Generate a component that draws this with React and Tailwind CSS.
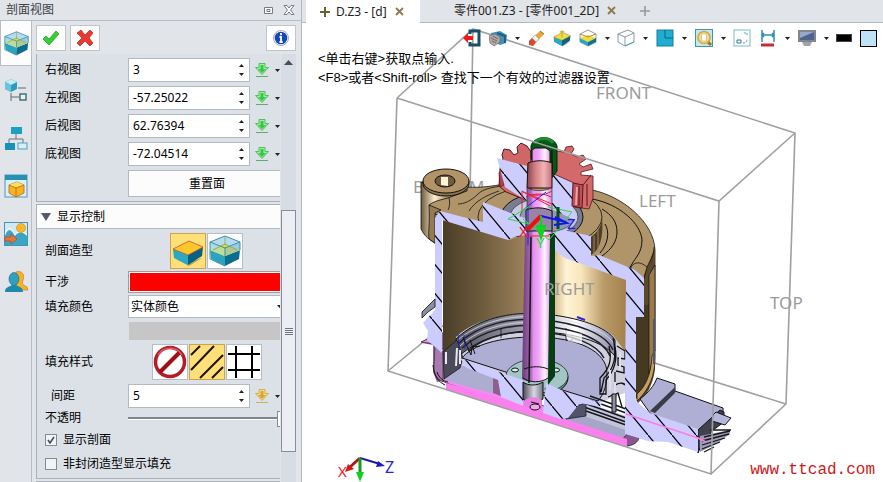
import React, { useState } from "react";

const views = [
  { id: "right", label: "右视图" },
  { id: "left", label: "左视图" },
  { id: "back", label: "后视图" },
  { id: "bottom", label: "底视图" },
];

function Caret({ className = "" }) {
  return (
    <svg className={className} width="5" height="3" viewBox="0 0 5 3">
      <path d="M0 0h5L2.5 3z" fill="#222" />
    </svg>
  );
}

function SectionBox({ size }) {
  return (
    <svg width={size} height={size} viewBox="0 0 32 32">
      <path d="M3 22l14 8 13-8-13 4z" fill="#556" opacity=".5" />
      <path d="M1 15l15 6v10L2 24z" fill="#2aa3bd" />
      <path d="M16 21l15-6-1 9-14 7z" fill="#0c6e8f" />
      <path d="M1 7l15-6 15 6v8l-15 6-15-6z" fill="#b4dcec" />
      <path d="M1 15l14-6 16 6-15 6z" fill="#d9de45" />
      <path d="M1 7l15 6v8L1 15z" fill="#a6d8ea" opacity=".5" />
      <path d="M16 13l15-6v8l-15 6z" fill="#7fbcd6" opacity=".5" />
      <path d="M1 7l15-6 15 6-15 6zM1 7v17l15 7M16 13v8M31 7v8" fill="none" stroke="#3d8fac" />
      <path d="M16 1v9M16 9l12 6M16 9L4 15" fill="none" stroke="#8a9a4a" strokeWidth=".7" />
    </svg>
  );
}

function SolidBox({ size, pin }) {
  return (
    <svg width={size} height={size} viewBox="0 0 32 32">
      <path d="M4 24l13 7 13-8-13 4z" fill="#665" opacity=".5" />
      <path d="M1 14l15 6v10L2 23z" fill="#29a9c3" />
      <path d="M16 20l15-8-1 9-14 9z" fill="#0a6283" />
      <path d="M1 14L17 6l14 6-15 8z" fill={pin ? "#e8e03c" : "#fdc72c"} stroke="#b5482a" strokeWidth=".7" />
      {pin && <path d="M16 2v13M12 5h8" stroke="#c8b020" strokeWidth="2" />}
    </svg>
  );
}

function CutBox() {
  return (
    <svg width="18" height="18" viewBox="0 0 18 18">
      <path d="M1 5l8-4 8 4v8l-8 4-8-4z" fill="#fff" stroke="#999" />
      <path d="M1 9l8-3 8 3-8 4z" fill="#f7dc2e" />
      <path d="M1 9l8 4v4l-8-4z" fill="#2aa6c2" />
      <path d="M17 9l-8 4v4l8-4z" fill="#0b7395" />
      <path d="M1 5l8 3 8-3" fill="none" stroke="#b8864a" />
    </svg>
  );
}

function DownloadIcon({ gold }) {
  return (
    <svg width="14" height="14" viewBox="0 0 14 14">
      <path
        d="M4 .5h6v4h3.500L7 11.500.5 4.500H4z"
        fill={gold ? "#f8dc84" : "#9df09c"}
        stroke={gold ? "#d4ae4c" : "#52c05c"}
      />
      <path d="M5.500 2h3v4H11L7 10 3 6h2.500z" fill={gold ? "#d9a436" : "#3cc44a"} />
      <path d="M1 13.500h12" stroke={gold ? "#c9b060" : "#56b166"} />
    </svg>
  );
}

function TreeIcon() {
  return (
    <svg width="24" height="24" viewBox="0 0 24 24">
      <path d="M1 4l6-3 6 3v7l-6 3-6-3z" fill="#2b9bc0" />
      <path d="M1 4l6-3 6 3-6 3z" fill="#c5ebf7" />
      <path d="M1 4l6 3v7l-6-3z" fill="#6cc3de" />
      <path d="M14 10h8M7 15v8M7 19h8" stroke="#5b6d74" fill="none" />
      <path d="M16 16h6v6h-6z" fill="#e8f2f4" stroke="#47707a" strokeWidth="1.5" />
    </svg>
  );
}

function AssemblyIcon() {
  return (
    <svg width="24" height="24" viewBox="0 0 24 24">
      <path d="M12 8v5M5 17v-4h14v4" fill="none" stroke="#6a7478" />
      <rect x="7" y="1" width="11" height="7" fill="#1ba0c0" />
      <rect x="1" y="17" width="10" height="7" fill="#1692b8" />
      <rect x="14" y="17" width="9" height="6" fill="#d4f0fa" stroke="#55a0b8" />
    </svg>
  );
}

function WindowIcon() {
  return (
    <svg width="24" height="24" viewBox="0 0 24 24">
      <rect x="1" y="1" width="22" height="22" fill="#d9effa" stroke="#5596b6" />
      <path d="M1 1h22v5H1z" fill="#2492b3" />
      <path d="M5 11l8-3 7 3v8l-8 4-7-4z" fill="#f6b51e" stroke="#b8641c" strokeWidth=".8" />
      <path d="M5 11l8-3 7 3-8 3z" fill="#ffe35c" />
      <path d="M5 11l7 3v9M12 14l8-3" fill="none" stroke="#b8641c" strokeWidth=".8" />
    </svg>
  );
}

function SceneIcon() {
  return (
    <svg width="24" height="24" viewBox="0 0 24 24">
      <rect x=".5" y=".5" width="23" height="23" fill="#cfe9f5" stroke="#4b93b3" />
      <path d="M1 14C4 6 7 7 11 14c4-5 8-4 12 0v9H1z" fill="#3aa5c4" />
      <path d="M1 12C4 4 7 5 11 13c4-5 8-4 12 0" fill="none" stroke="#fff" />
      <circle cx="17" cy="6" r="4.500" fill="#fbb829" stroke="#d98418" strokeWidth=".6" />
      <path d="M1 15h6v-3l6 5-6 5v-3H1z" fill="#f0703c" stroke="#b04418" strokeWidth=".6" />
    </svg>
  );
}

function PeopleIcon() {
  return (
    <svg width="24" height="22" viewBox="0 0 24 22">
      <path d="M12 1c6-2 9 3 7 8-1 3-2 4 4 7l1 3H12z" fill="#fbb21e" stroke="#c9801a" strokeWidth=".7" />
      <ellipse cx="10" cy="8" rx="5" ry="6.5" fill="#31a0bd" stroke="#176a86" strokeWidth=".6" />
      <path d="M1 21c0-5 4-5 7-7h4c3 2 7 2 7 7z" fill="#1b8aad" />
    </svg>
  );
}

function SpinField({ id, value, onChange }) {
  function step(amount) {
    onChange(String(Number(value) + amount));
  }

  return (
    <div className="flex h-6 w-[122px] shrink-0 border border-[#b4bac4] bg-white">
      <input
        id={id}
        className="w-0 flex-1 pl-1 text-xs text-black outline-none"
        value={value}
        onChange={(e) => onChange(e.target.value)}
      />
      <div className="flex w-4 flex-col items-center justify-center gap-1.5">
        <button type="button" aria-label="+" onClick={() => step(1)}>
          <Caret className="rotate-180" />
        </button>
        <button type="button" aria-label="-" onClick={() => step(-1)}>
          <Caret />
        </button>
      </div>
    </div>
  );
}

function NumberRow({ id, label, value, onChange, gold, indent }) {
  return (
    <div className="flex h-6 items-center">
      <label
        htmlFor={id}
        className={indent ? "w-[83px] shrink-0 pl-1.5" : "w-[83px] shrink-0"}
      >
        {label}
      </label>
      <SpinField id={id} value={value} onChange={onChange} />
      <button type="button" className="ml-[5px] flex shrink-0 items-center gap-1.5" aria-label={label}>
        <DownloadIcon gold={gold} />
        <Caret />
      </button>
    </div>
  );
}

function CheckRow({ id, label, checked, onChange }) {
  return (
    <div className="flex h-6 items-center gap-1.5">
      <span className="grid place-items-center">
        <input
          id={id}
          type="checkbox"
          checked={checked}
          onChange={(e) => onChange(e.target.checked)}
          className="col-start-1 row-start-1 size-3 appearance-none border border-[#858b92] bg-[#f2f3f4]"
        />
        {checked && (
          <svg className="pointer-events-none col-start-1 row-start-1" width="8" height="8" viewBox="0 0 8 8">
            <path d="M1 4l2 3 4-6" fill="none" stroke="#4a4f55" strokeWidth="1.6" />
          </svg>
        )}
      </span>
      <label htmlFor={id}>{label}</label>
    </div>
  );
}

function IconChoice({ active, onClick, label, children }) {
  return (
    <button
      type="button"
      aria-label={label}
      onClick={onClick}
      className={
        active
          ? "grid size-9 shrink-0 place-items-center border border-[#c9a552] bg-[#ffdf78]"
          : "grid size-9 shrink-0 place-items-center border border-[#b8bec8] bg-white"
      }
    >
      {children}
    </button>
  );
}

function SectionPanel() {
  const [values, setValues] = useState({
    right: "3",
    left: "-57.25022",
    back: "62.76394",
    bottom: "-72.04514",
  });
  const [spacing, setSpacing] = useState("5");
  const [shape, setShape] = useState("solid");
  const [fill, setFill] = useState("hatch");
  const [opacity, setOpacity] = useState(100);
  const [showSection, setShowSection] = useState(true);
  const [showOpen, setShowOpen] = useState(false);

  return (
    <div className="flex min-h-0 flex-1">
      <div className="flex w-[244px] flex-col gap-0.5 overflow-hidden">
        <section className="flex shrink-0 flex-col gap-1 border-b border-l border-[#a9b0b9] bg-[#dce0e7] pt-1 pb-1 pl-2">
          {views.map((view) => (
            <NumberRow
              key={view.id}
              id={view.id}
              label={view.label}
              value={values[view.id]}
              onChange={(v) => setValues({ ...values, [view.id]: v })}
            />
          ))}
          <button
            type="button"
            className="ml-[83px] h-[27px] w-[158px] border border-[#b4bac4] bg-[#fcfcfd]"
          >
            重置面
          </button>
        </section>

        <section className="shrink-0 border-y border-l border-[#a9b0b9] bg-[#dce0e7]">
          <h2 className="flex h-6 items-center gap-1.5 border-b border-[#b4bac4] bg-[#fcfcfd] pl-1">
            <svg width="10" height="8" viewBox="0 0 10 8">
              <path d="M0 0h10L5 8z" fill="#555b66" />
            </svg>
            显示控制
          </h2>
          <div className="pt-1 pb-0.5 pl-2">
            <div className="flex items-center">
              <span className="w-[125px] shrink-0">剖面造型</span>
              <div className="flex gap-px">
                <IconChoice label="实体" active={shape === "solid"} onClick={() => setShape("solid")}>
                  <SolidBox size={32} />
                </IconChoice>
                <IconChoice label="剖切" active={shape === "cut"} onClick={() => setShape("cut")}>
                  <SectionBox size={32} />
                </IconChoice>
              </div>
            </div>
            <div className="mt-0.5 flex items-center">
              <label htmlFor="clash" className="w-[83px] shrink-0">
                干涉
              </label>
              <button
                id="clash"
                type="button"
                className="h-[22px] w-[158px] shrink-0 border border-[#a39a9a] bg-[#ff0000] outline-1 -outline-offset-2 outline-white"
              />
            </div>
            <div className="mt-0.5 flex items-center">
              <label htmlFor="color" className="w-[83px] shrink-0">
                填充颜色
              </label>
              <div className="grid w-[158px] shrink-0 items-center">
                <select
                  id="color"
                  className="col-start-1 row-start-1 h-[23px] appearance-none border border-[#b4bac4] bg-white pl-0.5 text-xs"
                >
                  <option>实体颜色</option>
                </select>
                <Caret className="pointer-events-none col-start-1 row-start-1 mr-1 justify-self-end" />
              </div>
            </div>
            <div className="mt-1 ml-[84px] h-[18px] bg-[#c6c6c6]" />
            <div className="mt-1 flex items-center">
              <span className="w-[107px] shrink-0">填充样式</span>
              <div className="flex gap-px">
                <IconChoice label="无" active={fill === "none"} onClick={() => setFill("none")}>
                  <svg width="34" height="34" viewBox="0 0 34 34">
                    <circle cx="17" cy="17" r="14.5" fill="#fff" stroke="#b51c26" strokeWidth="3.5" />
                    <path d="M7 27L27 7" stroke="#a30d14" strokeWidth="4" />
                    <path d="M5 10a14 14 0 0 1 24 0" fill="none" stroke="#dd6070" strokeWidth="1.2" />
                  </svg>
                </IconChoice>
                <IconChoice label="斜线" active={fill === "hatch"} onClick={() => setFill("hatch")}>
                  <svg width="34" height="34" viewBox="0 0 34 34">
                    <path
                      d="M1 10l9-9M1 25L24 1M10 33L33 10M22 33l11-11"
                      stroke="#1b1608"
                      strokeWidth="2"
                    />
                  </svg>
                </IconChoice>
                <IconChoice label="网格" active={fill === "grid"} onClick={() => setFill("grid")}>
                  <svg width="34" height="34" viewBox="0 0 34 34">
                    <path d="M9 1v32M25 1v32M1 9h32M1 25h32" stroke="#000" strokeWidth="2" />
                  </svg>
                </IconChoice>
              </div>
            </div>
            <div className="mt-1">
              <NumberRow id="spacing" label="间距" value={spacing} onChange={setSpacing} gold indent />
            </div>
            <div className="flex h-5 items-center">
              <label htmlFor="opacity" className="w-[83px] shrink-0">
                不透明
              </label>
              <input
                id="opacity"
                type="range"
                value={opacity}
                onChange={(e) => setOpacity(e.target.value)}
                className="h-4 w-[157px] shrink-0 appearance-none bg-transparent [&::-webkit-slider-runnable-track]:h-[3px] [&::-webkit-slider-runnable-track]:border-b [&::-webkit-slider-runnable-track]:border-white [&::-webkit-slider-runnable-track]:bg-[#80858c] [&::-webkit-slider-thumb]:-mt-1.5 [&::-webkit-slider-thumb]:h-4 [&::-webkit-slider-thumb]:w-2 [&::-webkit-slider-thumb]:appearance-none [&::-webkit-slider-thumb]:border [&::-webkit-slider-thumb]:border-[#858b92] [&::-webkit-slider-thumb]:bg-white"
              />
            </div>
            <CheckRow id="show-section" label="显示剖面" checked={showSection} onChange={setShowSection} />
            <CheckRow id="show-open" label="非封闭造型显示填充" checked={showOpen} onChange={setShowOpen} />
          </div>
        </section>
        <div className="flex-1 border-t border-[#a9b0b9] bg-[#c9ced6]" />
      </div>

      <div className="ml-px flex w-[15px] flex-col items-center bg-[#d8dce4]">
        <svg className="mt-1.5" width="9" height="5" viewBox="0 0 9 5">
          <path d="M0 5h9L4.5 0z" fill="#4a4e57" />
        </svg>
        <div className="mt-[145px] mb-[30px] flex w-full flex-1 flex-col items-center justify-center gap-px border border-[#868d9b] bg-[#eceef4]">
          <span className="h-px w-2 bg-[#70757f]" />
          <span className="h-px w-2 bg-[#70757f]" />
          <span className="h-px w-2 bg-[#70757f]" />
          <span className="h-px w-2 bg-[#70757f]" />
        </div>
      </div>
    </div>
  );
}

function Sidebar() {
  return (
    <aside className="flex w-[301px] shrink-0 flex-col bg-[#e1e4e8]">
      <header className="flex h-[21px] shrink-0 items-center border-b border-[#b9bec6] px-1.5 text-[#3c4048]">
        <h1 className="flex-1">剖面视图</h1>
        <button type="button" aria-label="还原" className="mr-2.5">
          <svg width="9" height="7" viewBox="0 0 9 7">
            <path d="M.5.5h8v6h-8zM3 2.5h3v2H3z" fill="#fff" stroke="#777d86" />
          </svg>
        </button>
        <button type="button" aria-label="关闭">
          <svg width="12" height="10" viewBox="0 0 12 10">
            <path d="M1 .5h3l2 2.500 2-2.500h3L7.500 5 11 9.500H8L6 7 4 9.500H1L4.500 5z" fill="#fff" stroke="#777d86" />
          </svg>
        </button>
      </header>
      <div className="flex min-h-0 flex-1">
        <nav className="flex w-8 shrink-0 flex-col items-center border-r border-[#b9bec6]">
          <button type="button" aria-label="剖面" className="grid h-[45px] w-full place-items-center border-b border-l border-[#b9bec6] bg-[#fcfcfd]">
            <SectionBox size={25} />
          </button>
          <button type="button" aria-label="历史" className="grid h-12 place-items-center">
            <TreeIcon />
          </button>
          <button type="button" aria-label="装配" className="grid h-12 place-items-center">
            <AssemblyIcon />
          </button>
          <button type="button" aria-label="视图" className="grid h-12 place-items-center">
            <WindowIcon />
          </button>
          <button type="button" aria-label="视觉" className="grid h-12 place-items-center">
            <SceneIcon />
          </button>
          <button type="button" aria-label="角色" className="grid h-12 place-items-center">
            <PeopleIcon />
          </button>
        </nav>
        <div className="flex min-w-0 flex-1 flex-col pr-1 pl-1">
          <div className="flex h-[33px] shrink-0 items-center gap-1 pr-px">
            <button type="button" aria-label="确定" className="grid h-[26px] w-[30px] place-items-center border border-[#c0c5cd] bg-white">
              <svg width="18" height="16" viewBox="0 0 18 16">
                <path d="M1 9l3-3 3 3 7-8 3 3L7 15z" fill="#35cf2e" stroke="#1f9c20" strokeWidth=".7" />
              </svg>
            </button>
            <button type="button" aria-label="取消" className="grid h-[26px] w-[30px] place-items-center border border-[#c0c5cd] bg-white">
              <svg width="18" height="18" viewBox="0 0 18 18">
                <path d="M1 4l4-3 4 5 5-5 3 3-4 5 4 5-3 3-5-5-5 5-3-3 5-5z" fill="#ea3a2e" stroke="#b52620" strokeWidth=".7" />
              </svg>
            </button>
            <button type="button" aria-label="信息" className="ml-auto grid h-[26px] w-[30px] place-items-center border border-[#c0c5cd] bg-white">
              <svg width="16" height="16" viewBox="0 0 16 16">
                <circle cx="8" cy="8" r="7.500" fill="#fff" stroke="#8a94b0" strokeWidth=".8" />
                <circle cx="8" cy="8" r="6.300" fill="#1447b8" />
                <path d="M8 3v2.200M6.500 7H8v5M6.500 12h3.200" fill="none" stroke="#fff" strokeWidth="1.800" />
              </svg>
            </button>
          </div>
          <SectionPanel />
        </div>
      </div>
    </aside>
  );
}

function Tabs() {
  return (
    <nav className="flex h-[23px] shrink-0 items-end border-b border-[#b3b8c0] bg-[#e1e4e8] pl-1 text-[#222]">
      <div className="-mb-px flex h-[23px] w-[114px] items-center bg-white pl-3.5">
        <svg width="10" height="10" viewBox="0 0 10 10">
          <path d="M5 0v10M0 5h10" stroke="#6d5f35" strokeWidth="2" />
        </svg>
        <button type="button" className="ml-1.5 whitespace-nowrap">
          D.Z3 - [d]
        </button>
        <button type="button" aria-label="关闭" className="ml-2">
          <svg width="9" height="9" viewBox="0 0 9 9">
            <path d="M1 1l7 7M8 1L1 8" stroke="#8a7b4b" strokeWidth="1.800" />
          </svg>
        </button>
      </div>
      <div className="flex h-[23px] items-center pl-[34px]">
        <button type="button" className="whitespace-nowrap">
          零件001.Z3 - [零件001_2D]
        </button>
        <button type="button" aria-label="关闭" className="ml-2">
          <svg width="9" height="9" viewBox="0 0 9 9">
            <path d="M1 1l7 7M8 1L1 8" stroke="#8a7b4b" strokeWidth="1.800" />
          </svg>
        </button>
        <button type="button" aria-label="新建" className="ml-6">
          <svg width="10" height="10" viewBox="0 0 10 10">
            <path d="M5 0v10M0 5h10" stroke="#999" strokeWidth="1.600" />
          </svg>
        </button>
      </div>
    </nav>
  );
}

function Tool({ label, menu, children }) {
  return (
    <button type="button" aria-label={label} className="flex h-[18px] items-center gap-2">
      {children}
      {menu && <Caret />}
    </button>
  );
}

function Toolbar() {
  return (
    <div className="mt-1.5 mr-1.5 ml-auto flex w-[414px] justify-between">
      <Tool label="退出">
        <svg width="18" height="18" viewBox="0 0 18 18">
          <path d="M7 5V2h9v14H7v-3" fill="none" stroke="#174f66" strokeWidth="3" />
          <path d="M0 9l5-5v3h5v4H5v3z" fill="#f01818" />
        </svg>
      </Tool>
      <Tool label="模型" menu>
        <svg width="18" height="18" viewBox="0 0 18 18">
          <path d="M2 4l9-2 7 4-1 8-6 2-8-4z" fill="#3c93b5" />
          <path d="M8 4l8 3v7" fill="none" stroke="#1f5f88" strokeWidth="2" />
          <path d="M0 7l6-2 5 3v5l-6 4-4-3z" fill="#b6a9a4" stroke="#6d6a70" strokeWidth=".7" />
          <path d="M2 9l6 3M4 7l5 3M3 12l4 2" stroke="#555" strokeWidth=".8" />
        </svg>
      </Tool>
      <Tool label="擦除">
        <svg width="18" height="18" viewBox="0 0 18 18">
          <path d="M2 12L13 2l4 3L6 17z" fill="#e9a53c" />
          <path d="M2 12l3-3 4 4-3 4-4-1z" fill="#d6493a" />
          <path d="M5 9l3-3 4 4-3 3z" fill="#f4f0ea" stroke="#999" strokeWidth=".5" />
          <path d="M13 2l4 3" stroke="#9a6820" />
        </svg>
      </Tool>
      <Tool label="拉伸">
        <SolidBox size={18} pin />
      </Tool>
      <Tool label="剖切" menu>
        <CutBox />
      </Tool>
      <Tool label="线框" menu>
        <svg width="18" height="18" viewBox="0 0 18 18">
          <path d="M1 5l10-4 6 3v9l-9 4-7-4z" fill="#fff" stroke="#8b97a0" />
          <path d="M1 5l7 3 9-4M8 8v9" fill="none" stroke="#8b97a0" />
          <path d="M8 17l9-4" stroke="#3aa2c0" />
        </svg>
      </Tool>
      <Tool label="平面" menu>
        <svg width="18" height="18" viewBox="0 0 18 18">
          <rect x="1" y="1" width="16" height="16" fill="#20aed0" stroke="#127f9f" />
          <path d="M9 1v8h8" fill="none" stroke="#0a647f" />
        </svg>
      </Tool>
      <Tool label="缩放" menu>
        <svg width="18" height="18" viewBox="0 0 18 18">
          <rect x=".5" y=".5" width="17" height="17" fill="#c4e6f1" stroke="#3a98b5" />
          <path d="M12 12l4 4" stroke="#a5741a" strokeWidth="3" />
          <circle cx="9" cy="8.500" r="6" fill="#f3dc8c" stroke="#d8a838" strokeWidth="1.600" />
          <path d="M6.500 5h5v7h-5z" fill="#fff" stroke="#c8b888" strokeWidth=".7" />
        </svg>
      </Tool>
      <Tool label="适应">
        <svg width="18" height="18" viewBox="0 0 18 18">
          <rect x="1" y="1" width="16" height="16" fill="#fff" stroke="#79b8cc" />
          <path d="M4 11h4v3H4z" fill="#fff" stroke="#287b96" />
          <path d="M10 14c3 0 4-2 4-4M11 4h3v3" fill="none" stroke="#4aa2bd" strokeDasharray="2 1" />
        </svg>
      </Tool>
      <Tool label="标注" menu>
        <svg width="18" height="18" viewBox="0 0 18 18">
          <path d="M3 1v12M15 1v12M3 6h12M5 4L3 6l2 2M13 4l2 2-2 2" fill="none" stroke="#2f91ad" strokeWidth="1.500" />
          <path d="M2 16h13" stroke="#c62b36" strokeWidth="3" />
        </svg>
      </Tool>
      <Tool label="显示" menu>
        <svg width="18" height="18" viewBox="0 0 18 18">
          <path d="M0 1h18v12H0z" fill="#82868d" />
          <path d="M2 3h14v8H2z" fill="#4f6493" />
          <path d="M2 3h14L2 9z" fill="#98a8c6" />
          <path d="M4 13h10l-2 4H6z" fill="#a0a3a8" />
        </svg>
      </Tool>
      <Tool label="线宽">
        <span className="h-2 w-4 border border-[#444] bg-black" />
      </Tool>
      <Tool label="颜色">
        <span className="size-[17px] border border-black bg-[#bfe2f7]" />
      </Tool>
    </div>
  );
}

function Model() {
  return (
    <svg
      className="absolute inset-0 h-full w-full"
      viewBox="302 23 581 459"
      preserveAspectRatio="xMinYMin meet"
      role="img"
      fontFamily="'Noto Sans', sans-serif"
    >
      <defs>
        <linearGradient id="bore" gradientUnits="userSpaceOnUse" x1="443" y1="0" x2="630" y2="0">
          <stop offset="0" stopColor="#4a3e28" />
          <stop offset=".2" stopColor="#6c5a3c" />
          <stop offset=".4" stopColor="#947a55" />
          <stop offset=".57" stopColor="#c6a570" />
          <stop offset=".66" stopColor="#fff3d6" />
          <stop offset=".74" stopColor="#f8e5bb" />
          <stop offset=".86" stopColor="#b99a68" />
          <stop offset="1" stopColor="#a07d48" />
        </linearGradient>
        <linearGradient id="boss" x1="0" x2="1">
          <stop offset="0" stopColor="#6b593b" />
          <stop offset=".25" stopColor="#fff0cf" />
          <stop offset=".45" stopColor="#b2956a" />
          <stop offset="1" stopColor="#8c744f" />
        </linearGradient>
        <linearGradient id="shaft" gradientUnits="userSpaceOnUse" x1="523" y1="0" x2="552" y2="0">
          <stop offset="0" stopColor="#70407e" />
          <stop offset=".28" stopColor="#a86ab5" />
          <stop offset=".36" stopColor="#e690f0" />
          <stop offset=".55" stopColor="#f0a8f8" />
          <stop offset=".75" stopColor="#fff2ff" />
          <stop offset="1" stopColor="#d683df" />
        </linearGradient>
        <linearGradient id="hub" gradientUnits="userSpaceOnUse" x1="527" y1="0" x2="553" y2="0">
          <stop offset="0" stopColor="#88424d" />
          <stop offset=".35" stopColor="#d9858a" />
          <stop offset=".65" stopColor="#f0b4b4" />
          <stop offset="1" stopColor="#c26474" />
        </linearGradient>
        <linearGradient id="metal" x1="0" x2="1">
          <stop offset="0" stopColor="#4b4b58" />
          <stop offset=".55" stopColor="#d8d8de" />
          <stop offset="1" stopColor="#77778a" />
        </linearGradient>
        <linearGradient id="flange" x1="0" x2="1">
          <stop offset="0" stopColor="#55555f" />
          <stop offset=".5" stopColor="#a9a9b8" />
          <stop offset=".75" stopColor="#ffffff" />
          <stop offset="1" stopColor="#8888a6" />
        </linearGradient>
        <pattern id="hatch" patternUnits="userSpaceOnUse" width="24" height="29">
          <path d="M-24 -29L48 58" stroke="#000" strokeWidth="1.200" />
        </pattern>
      </defs>

      {/* far edges of the bounding box */}
      <g stroke="#a0a0a0" strokeWidth="1.600" fill="none">
        <path d="M397 98L473 29L795 133L786 404L711 474M473 29L468 305L388 371M468 305L786 404" />
      </g>
      <g fill="#9b9b9b" fontSize="17">
        <text x="596" y="99">FRONT</text>
        <text x="413" y="193">BOTTOM</text>
        <text x="639" y="207">LEFT</text>
        <text x="770" y="309">TOP</text>
      </g>

      {/* base tray */}
      <path d="M422 341l13-2 10-9v50l-8 2-4-10v-27l-11-2z" fill="#8d6396" />
      <path d="M421 342l7-3 9 5v26c0 8 6 12 12 14L627 446l8-3-3-10L447 376V352l-12-8z" fill="#f68af0" stroke="#222" strokeWidth=".7" />
      <path d="M435 344l8 8v30c-6-3-9-8-9-14z" fill="#a97ab0" stroke="#222" strokeWidth=".6" />
      <path d="M444 352l60 20-10 22-47-13c-4-4-3-20-3-29z" fill="#adadd2" />
      <path d="M560 392l65 25v22l-65-20z" fill="#a6a6c8" />
      <path d="M437 372c2 6 6 9 11 10M433 365c1 12 6 17 12 20" fill="none" stroke="#111" />
      <path d="M620 442l8 4c6-1 10-4 11-8l-12-4z" fill="#8a5690" stroke="#222" strokeWidth=".7" />

      {/* housing body */}
      <path d="M421 182v47c4 8 9 11 15 15v-30l40-6-10-25z" fill="url(#boss)" stroke="#111" strokeWidth=".8" />
      <path d="M429 205c8-6 16-5 24-9l14-5v-4c15 1 25-1 38-3l87 6c30 6 62 32 63 60v100l-22 50-10-120-188-66z" fill="#b1956a" stroke="#111" strokeWidth=".8" />
      <path d="M429 205c1 20-1 27 0 34l6 4v-30l6-3z" fill="#957b54" stroke="#111" strokeWidth=".8" />
      <path d="M449 198c1 4 1 8-1 12M458 204c6 0 13-3 20-10 5-5 12-6 22-8M469 211c6-10 18-16 30-20" fill="none" stroke="#111" strokeWidth=".8" />
      <path d="M423 181v3c0 5 8 12 23 12s23-7 23-12v-3z" fill="#8a724c" stroke="#111" />
      <ellipse cx="446" cy="181" rx="23" ry="12" fill="#b39468" stroke="#111" />
      <ellipse cx="445" cy="181" rx="10" ry="6" fill="#6f5c3e" stroke="#111" />
      <path d="M441 177h7v9l-7-1z" fill="#fff4d8" />

      {/* outer wall and top rings */}
      <path d="M644 275l11-28v122c-2 16-8 26-18 35z" fill="#5b492b" />
      <path d="M636 305h13v84l-13 10z" fill="#463922" />
      <path d="M649 275l6-10v85l-6 24z" fill="#9b7b4c" stroke="#111" strokeWidth=".7" />
      <path d="M655 350c1 20-3 37-18 51v-7c9-8 14-20 15-38z" fill="#c59e63" stroke="#111" strokeWidth=".7" />
      <path d="M654 319v45" stroke="#56566b" strokeWidth="2" />
      <path d="M592 199c28 5 49 25 50 41 0 13-7 18-10 24l-3 5M602 209c10 6 15 13 15 23 0 9-5 17-15 24M605 224c5 8 3 20-5 29" fill="none" stroke="#111" />
      <path d="M631 267c4-6 10-5 16 0 3-6 7-11 7-20M631 267v7M647 267l-3 12" fill="none" stroke="#111" strokeWidth=".8" />
      <ellipse cx="540" cy="217" rx="62" ry="31" fill="#b1956a" stroke="#111" strokeWidth=".8" />
      <path d="M602 217c0 9-5 16-11 20v18c8-4 13-16 11-38z" fill="#4d3f28" />
      <path d="M594 236v20M598 230v22" stroke="#a28456" />
      <ellipse cx="542" cy="217" rx="41" ry="24" fill="#7b7b91" stroke="#111" />
      <ellipse cx="544" cy="217" rx="34" ry="19" fill="#c4cbe6" stroke="#333" strokeWidth=".7" />
      <ellipse cx="547" cy="217" rx="27" ry="15" fill="#9298b5" stroke="#333" strokeWidth=".7" />

      {/* bore */}
      <path d="M443 218l67 22 15-6 25 8 15 10 63 24v114l-100-30-85-5z" fill="url(#bore)" />

      {/* disc and flanges inside the bore */}
      <path d="M456 337c18-18 55-26 87-23 35 3 64 13 72 24l12 16v38l-38 15-86-28-43-14z" fill="#cfcfe0" />
      <path d="M456 339c20-20 55-28 87-25 35 3 64 13 72 26v16c-12-15-42-23-74-24-36-1-60 5-82 24z" fill="url(#flange)" stroke="#111" />
      <path d="M458 344c21-20 53-27 85-24 35 3 63 14 70 30M462 348c20-18 51-25 81-22 33 3 60 13 67 30M468 351c17-15 47-22 75-19 30 3 54 12 61 26" fill="none" stroke="#1e1e2c" strokeWidth="1.500" />
      <path d="M457 341c20-19 55-27 86-24 34 3 63 13 71 27M460 346c20-19 53-26 83-23" fill="none" stroke="#dcdce8" strokeWidth=".8" />
      <path d="M462 358c10-13 38-21 72-21 45 0 73 15 73 36 0 12-3 21-9 28l-55-17z" fill="#aeaed4" stroke="#111" />
      <path d="M501 328v10M566 328v12l6 1v-3l8 3" fill="none" stroke="#111" strokeWidth=".8" />
      <path d="M568 341l14 3v-10l-18-4z" fill="#fff" opacity=".7" />
      <path d="M577 317l8 3" stroke="#2828d8" strokeWidth="2" />
      <path d="M613 338c4 16 2 30-9 40l-3 14M609 346c3 14 1 22-9 32v16h6v-14c8-9 12-19 9-33M617 346l8 5v8l-7-1v7l6 2v6l-8-2M614 386c6-5 11-3 14 2M608 397l10-4 4 14M615 372v22" fill="none" stroke="#111" strokeWidth="1.300" />
      <path d="M610 370v20M620 352v18M615 382v16" stroke="#ddddee" strokeWidth="2" />
      <path d="M443 352l14-12 6 18-3 10-16 11z" fill="#4a4a58" stroke="#111" strokeWidth=".7" />
      <path d="M446 352v12M457 348l-1 18M460 350v14" stroke="#e8e8f4" strokeWidth="2" />
      <path d="M458 334l1 14M464 335l1 14" stroke="#2525c8" />
      <path d="M463 337l8 18 1-8 8-1M470 340l5 14" fill="none" stroke="#111" />

      {/* terminal strip */}
      <path d="M584 402l42 14v14l-42-14z" fill="#c3c3d8" />
      <path d="M584 403l42 15M584 407l42 15M586 411l40 14M590 400l36 13M590 396l36 13" stroke="#161620" strokeWidth="1.400" />
      <path d="M612 394h4v18h-4z" fill="#9090a8" stroke="#111" />

      {/* connector housing */}
      <path d="M657 378l18 6v7l48 17v12l-25 24-48-31-10-14c8-6 14-13 17-21z" fill="#afafd6" stroke="#111" />
      <path d="M650 411l25-24v6l-20 20z" fill="#3b3b48" />
      <path d="M698 430l22-20 4 2v10l-11 8-12 16-3 7z" fill="#42424f" stroke="#111" />
      <path d="M713 415l3-3 15 6-6 7-13-4z" fill="#b7b7de" stroke="#111" />
      <path d="M700 436l30-6v4l-14 10-16 8z" fill="#9c9cb4" />
      <path d="M710 430l21 0M704 437l26-6M702 441l27-7M702 445l23-7M702 449l18-7M704 452l10-5" stroke="#18181f" strokeWidth="1.300" />

      {/* bottom plate flange around the shaft */}
      <ellipse cx="537" cy="378" rx="31" ry="18" fill="#6f9191" stroke="#111" />
      <ellipse cx="537" cy="376" rx="31" ry="17" fill="#a2c6c6" stroke="#111" strokeWidth=".7" />
      <ellipse cx="515" cy="370" rx="3.500" ry="2" fill="#d8eeee" stroke="#111" />
      <ellipse cx="556" cy="370" rx="3.500" ry="2" fill="#d8eeee" stroke="#111" />
      <ellipse cx="548" cy="389" rx="3" ry="2" fill="#d8eeee" stroke="#111" />

      {/* pink layer of the cut base */}
      <path d="M446 383l47 13 134 43v8L446 389z" fill="#fb7fec" />
      <path d="M493 376l10 3v18l-10-4z" fill="#8c618f" />
      <path d="M566 401l14 4 6-3v14l-20 3z" fill="#52526a" stroke="#111" strokeWidth=".7" />

      {/* left half of the gear */}
      <path d="M499 186l1-17 3-11-1-3 2-6 6 1 4 5 4-2-1-6 4-4 6 3 4 6v50l-25-10z" fill="#cf6767" stroke="#54171d" />
      <path d="M500 187l-1-14 5-8v20z" fill="#a8454e" stroke="#54171d" strokeWidth=".7" />

      {/* cut faces */}
      {[
        "M440 211l-5 7v92l-12 13 5 8-1 9 15 13V220l66 20 8-4 11-1v-16l-19-7-25-10v20l-24-6z",
        "M497 158l30 8v35l-22-14z",
        "M551 173l22 8v28l4 12-26-12z",
        "M548 234l15-4 28 6v20l8-1 36 15 9 8v39h-8v84l14 12 48 16v23l-30-10-20-1-23-7V385l1-105-61-22-17-13z",
        "M460 358l45 16 18 6v26l-22-9-3-17-31-12z",
        "M546 383l24 11 32 9-2 4-20-4-12 15-8 1-17-6z",
      ].map((d) => (
        <g key={d}>
          <path d={d} fill="#ccccff" />
          <path d={d} fill="url(#hatch)" />
        </g>
      ))}
      <path d="M428 312l7-5v-8l-13 13v6z" fill="#8b8ba4" stroke="#111" strokeWidth=".8" />
      <path d="M626 414l72 24 8 4" fill="none" stroke="#fa7ee6" strokeWidth="1.800" />

      {/* right half of the gear */}
      <path d="M556 151l8 1 2-5 6-1 2 3-3 5 6 3 6-2 3 4-7 5 4 3 8-3 2 5-12 3v3l12 1v22l-4 11-15-2v-24l-20-9z" fill="#d36a69" stroke="#54171d" strokeWidth=".8" />
      <path d="M573 183l10 2-1 23-10-2zM583 185l8-10M579 186v20M587 184v22" fill="#bd5158" stroke="#54171d" />
      <path d="M577 187l-1 18" stroke="#f2a1a1" strokeWidth="2" />

      {/* shaft */}
      <path d="M531 146c2-10 22-12 26 0v25l-6 8-20-20z" fill="#075716" stroke="#032409" />
      <path d="M534 143c5-6 15-6 19 0" fill="none" stroke="#1d8c31" strokeWidth="3" />
      <path d="M552 150v24" stroke="#022f09" strokeWidth="2" />
      <path d="M532 150l3-2h11l4 3v13h-18z" fill="url(#shaft)" stroke="#111" />
      <path d="M528 163c7-3 17-3 24 0v25h-25z" fill="url(#hub)" stroke="#111" />
      <path d="M527 188c9 4 17 3 25 0v48h-25z" fill="url(#shaft)" stroke="#333" strokeWidth=".7" />
      <path d="M523 192c10 5 21 4 29-1M526 197c8-4 18-4 25 0" fill="none" stroke="#d02048" />
      <path d="M526 210c8-3 18-3 26 1v20h-26z" fill="#9b83a8" stroke="#111" />
      <path d="M547 234h8v142l-7 9z" fill="#063d13" />
      <path d="M525 234c6-3 18-3 25 1l-2 144c-7 4-20 4-26 0z" fill="url(#shaft)" />
      <path d="M531 237l-2 146" stroke="#15101a" strokeWidth="1.500" />
      <path d="M524 369c8-3 17-3 24 0M523 378c7 5 18 5 25 0" fill="none" stroke="#111" />
      <path d="M523 382c5 4 14 4 20 0v17c-5 4-15 4-20 0z" fill="url(#metal)" stroke="#111" />
      <path d="M524 401c6-5 14-5 18 0v9l-18-4z" fill="#eb7fe5" />
      <ellipse cx="535" cy="407" rx="5" ry="3" fill="#f0a8ee" stroke="#111" />
      <path d="M531 402l8 2" stroke="#111" />

      {/* plane markers and origin triad */}
      <path d="M522 211v-20l28 15M528 194l24 10M527 236h22" fill="none" stroke="#f02030" />
      <path d="M528 245v-39l18-14" fill="none" stroke="#2525e0" />
      <path d="M508 219l22-13M508 219l43 10M572 212l-23 28M572 212l-24-5M549 240l-26-21" fill="none" stroke="#32d64a" />
      <path d="M558 207v22" fill="none" stroke="#0a4c15" strokeWidth="3" />
      <path d="M541 216L527 230" stroke="#e81010" strokeWidth="4" />
      <path d="M541 216l25 6M555 217l12 6-13 2" fill="none" stroke="#1018e8" strokeWidth="2" />
      <path d="M541 216v18M537 226h8l-4 12z" fill="#10e020" stroke="#10d020" strokeWidth="2" />
      <g fontSize="15">
        <text x="519" y="237" fill="#f01818">X</text>
        <text x="567" y="229" fill="#2020f0">Z</text>
        <text x="536" y="248" fill="#18e028">Y</text>
      </g>

      {/* near edges of the bounding box */}
      <path d="M397 98L719 201L795 133M397 98L388 371L711 474L719 201" fill="none" stroke="#a0a0a0" strokeWidth="1.600" />
      <text x="544" y="295" fill="#9b9b9b" fontSize="17">RIGHT</text>

      {/* corner triad */}
      <path d="M360 458L350 467" stroke="#b01818" strokeWidth="3" />
      <path d="M345 472l3-8 6 5z" fill="#d01818" />
      <path d="M360 458l20 6" stroke="#1c1c9c" strokeWidth="2" />
      <path d="M385 466l-9 1 2-6z" fill="#1c1cc8" />
      <path d="M360 458v17" stroke="#149c20" strokeWidth="3" />
      <path d="M356 472h8l-4 10z" fill="#12d022" />
      <text x="338" y="477" fill="#f02020" fontSize="15">X</text>
      <text x="385" y="473" fill="#2828d8" fontSize="16">Z</text>
    </svg>
  );
}

export default function App() {
  return (
    <div className="flex h-screen overflow-hidden bg-white font-['Noto_Sans','Noto_Sans_CJK_SC',sans-serif] text-xs text-black">
      <Sidebar />
      <main className="flex min-w-0 flex-1 flex-col border-l border-[#b3b8c0]">
        <Tabs />
        <div className="relative flex min-h-0 flex-1 flex-col">
          <Model />
          <div className="relative flex flex-1 flex-col">
            <Toolbar />
            <div className="mt-0.5 pl-4 font-['Liberation_Sans','Noto_Sans_CJK_SC',sans-serif] text-[13px] leading-[19px]">
              <p>&lt;单击右键&gt;获取点输入.</p>
              <p>&lt;F8&gt;或者&lt;Shift-roll&gt; 查找下一个有效的过滤器设置.</p>
            </div>
            <p className="mt-auto mr-2 mb-0.5 self-end font-['Liberation_Mono',monospace] text-base leading-5 text-[#d01818]">
              www.ttcad.com
            </p>
          </div>
        </div>
      </main>
    </div>
  );
}
